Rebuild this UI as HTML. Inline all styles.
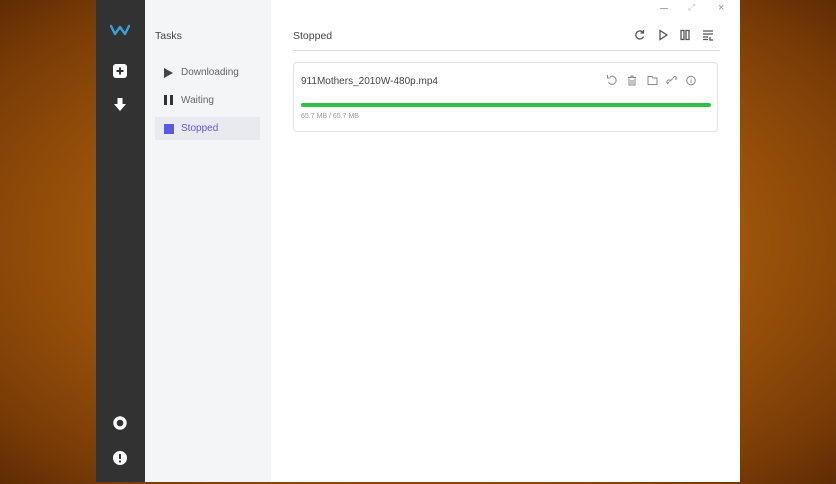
<!DOCTYPE html>
<html><head><style>
*{margin:0;padding:0;box-sizing:border-box}
body{width:836px;height:484px;overflow:hidden;position:relative;font-family:"Liberation Sans",sans-serif;
background:radial-gradient(ellipse at 50% 50%,#c77a1c 0%,#a85c0c 45%,#7a3c06 85%,#5e2c04 100%);}
.win{position:absolute;left:96px;top:0;width:644px;height:482px;background:#fff;}
.side{position:absolute;left:0;top:0;width:49px;height:482px;background:#323232;}
.nav{position:absolute;left:49px;top:0;width:126px;height:482px;background:#f4f5f7;}
.main{position:absolute;left:175px;top:0;right:0;height:482px;}
.t{position:absolute;font-size:10.5px;color:#555;}
.item{position:absolute;left:10px;width:105px;height:23px;font-size:10px;color:#666;line-height:23px;padding-left:26px}
svg{position:absolute}
</style></head><body>
<div class="win">
 <div class="side">
  <svg style="left:14px;top:24px" width="20" height="12" viewBox="0 0 20 12"><path d="M1 2 L5 10 L10 3 L15 10 L19 2" stroke="#3a9fd6" stroke-width="2.4" fill="none" stroke-linecap="round" stroke-linejoin="round"/></svg>
  <svg style="left:17px;top:64px" width="14" height="14" viewBox="0 0 14 14"><rect x="0" y="0" width="14" height="14" rx="3" fill="#fff"/><path d="M7 3.5V10.5M3.5 7H10.5" stroke="#323232" stroke-width="2"/></svg>
  <svg style="left:17px;top:98px" width="14" height="14" viewBox="0 0 14 14"><path d="M4.5 0H9.5V6H13L7 13L1 6H4.5Z" fill="#fff"/></svg>
  <svg style="left:17px;top:416px" width="14" height="14" viewBox="0 0 14 14"><circle cx="7" cy="7" r="5" fill="none" stroke="#fff" stroke-width="3.4"/></svg>
  <svg style="left:17px;top:451px" width="14" height="14" viewBox="0 0 14 14"><circle cx="7" cy="7" r="7" fill="#fff"/><path d="M7 3V8" stroke="#323232" stroke-width="2"/><circle cx="7" cy="10.5" r="1.1" fill="#323232"/></svg>
 </div>
 <div class="nav">
  <div class="t" style="left:10px;top:30px;color:#444">Tasks</div>
  <div class="item" style="top:61px"><svg style="left:9px;top:7px" width="9" height="10"><path d="M0 0L9 5L0 10Z" fill="#444"/></svg>Downloading</div>
  <div class="item" style="top:89px"><svg style="left:9px;top:6px" width="9" height="10"><rect x="0" y="0" width="3" height="10" fill="#333"/><rect x="6" y="0" width="3" height="10" fill="#333"/></svg>Waiting</div>
  <div class="item" style="top:117px;background:#e8eaef;color:#5b5bd6"><svg style="left:9px;top:7px" width="10" height="10"><rect width="10" height="10" fill="#5a5ae0"/></svg>Stopped</div>
 </div>
 <div class="main">
  <div style="position:absolute;left:389px;top:8px;width:8px;height:1px;background:#aaa"></div>
  <div class="t" style="left:417px;top:2px;color:#bbb;font-size:9px">⤢</div>
  <div class="t" style="left:447px;top:2px;color:#999;font-size:11px">×</div>
  <div class="t" style="left:22px;top:30px;color:#444">Stopped</div>
  <svg style="left:363px;top:29px" width="82" height="12" viewBox="0 0 82 12" fill="none" stroke="#555" stroke-width="1.3">
   <path d="M9 3.5A4 4 0 1 0 9.5 7.5"/><path d="M9.5 1V4H6.5"/>
   <path d="M26 1.5L33 6L26 10.5Z"/>
   <rect x="47" y="1.5" width="3" height="9"/><rect x="52" y="1.5" width="3" height="9"/>
   <path d="M69 2H79M69 5H79M69 8H74M69 10.5H74M76 8V11H79"/>
  </svg>
  <div style="position:absolute;left:22px;top:50px;width:427px;height:1px;background:#ddd"></div>
  <div style="position:absolute;left:22px;top:62px;width:425px;height:70px;border:1px solid #e2e2e2;border-radius:4px">
   <div class="t" style="left:7px;top:13px;font-size:10px;color:#444">911Mothers_2010W-480p.mp4</div>
   <svg style="left:312px;top:11px" width="100" height="13" viewBox="0 0 100 13" fill="none" stroke="#888" stroke-width="1">
    <path d="M4 3A4 4 0 1 1 2.5 8"/><path d="M1.5 1V4H4.5"/>
    <path d="M22 3.5H30M25 3.5V2H27V3.5M23 4.5V11H29V4.5M25 6V10M27 6V10"/>
    <path d="M42 2.5H46L47 4H51V10.5H42Z"/>
    <path d="M63 8L61.5 9.5A1.4 1.4 0 0 1 64.5 6.5M67 4L68.5 2.5A1.4 1.4 0 0 1 69 5.5M63.5 7.5L67 4.5"/>
    <circle cx="85" cy="6.5" r="4.3"/><path d="M85 5.5V9M85 3.8V4.4"/>
   </svg>
   <div style="position:absolute;left:7px;top:40px;width:410px;height:4px;border-radius:2px;background:#2fbf49"></div>
   <div class="t" style="left:7px;top:50px;font-size:7px;color:#999">65.7 MB / 65.7 MB</div>
  </div>
 </div>
</div>
</body></html>
